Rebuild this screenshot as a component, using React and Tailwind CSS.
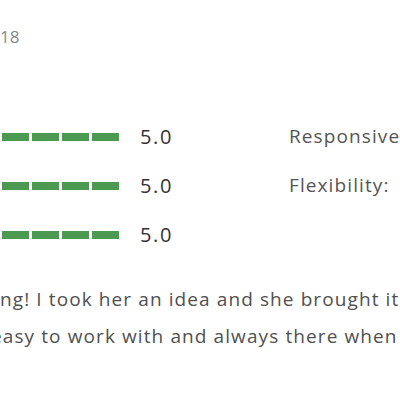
const ratings = [
  { score: '5.0', label: 'Responsiveness:' },
  { score: '5.0', label: 'Flexibility:' },
  { score: '5.0', label: '' },
];

const Bars = () => (
  <div className="w-[119px] shrink-0">
    <div className="flex gap-[3px] ml-[-28px]">
      {[0, 1, 2, 3, 4].map((i) => (
        <span key={i} className="block w-[27px] h-[8px] bg-[#4c9a52]" />
      ))}
    </div>
  </div>
);

export default function App() {
  return (
    <div className="w-[400px] h-[400px] overflow-hidden bg-white font-['Open_Sans',sans-serif]">
      <div className="pt-[28px] text-[17px] leading-[18px] text-[#8a8a8a]">18</div>

      <div className="mt-[66px]">
        {ratings.map((r, i) => (
          <div key={i} className="flex items-center h-[49px] whitespace-nowrap">
            <Bars />
            <span className="ml-[21px] w-[149px] shrink-0 text-[20px] tracking-[1.6px] text-[#333]">{r.score}</span>
            <span className="text-[19px] tracking-[1.1px] text-[#555]">{r.label}</span>
          </div>
        ))}
      </div>

      <div className="mt-[22px] text-[19px] leading-[37px] tracking-[1.1px] text-[#505050] whitespace-nowrap">
        <p>ng! I took her an idea and she brought it to life</p>
        <p className="ml-[-9px]">easy to work with and always there when I needed her</p>
      </div>
    </div>
  );
}
